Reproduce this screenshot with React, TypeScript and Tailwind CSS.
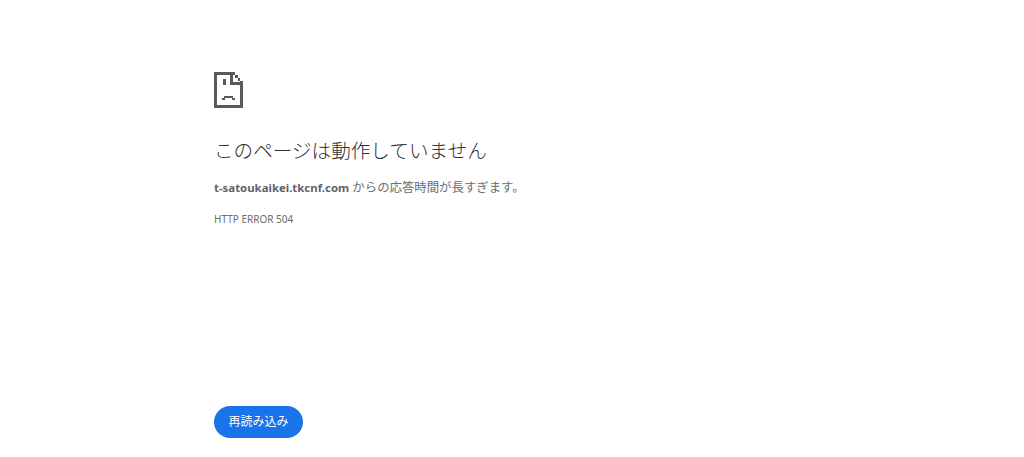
import React from 'react';

const stack = { fontFamily: '"Noto Sans", "Noto Sans CJK JP", sans-serif' };

function SadTab() {
  return (
    <svg width="29" height="36" viewBox="0 0 29 36" fill="none" shapeRendering="crispEdges">
      <path
        d="M0 0h21v3h3v3h2v3h3v27h-29z M3 3v30h23v-20h-10v-10z M19 3v7h7v-1h-2v-3h-3v-3z"
        fill="#5a5a5a"
        fillRule="evenodd"
      />
      <path d="M9 7h3v6h-3z" fill="#5a5a5a" />
      <path d="M8 26h2v-2h9v2h2v2h-3v-2h-7v2h-3z" fill="#5a5a5a" />
    </svg>
  );
}

export default function App() {
  return (
    <div className="h-[457px] w-[1024px] overflow-hidden bg-white" style={stack}>
      <div className="flex h-full flex-col pl-[214px] pt-[72px] pb-[19px]">
        <SadTab />
        <h1 className="mt-[29px] text-[19.6px] leading-[28px] font-light text-[#2f3235]">このページは動作していません</h1>
        <p className="mt-[13px] text-[12.4px] leading-[20px] text-[#6a6d71]">
          <span className="text-[11.4px] font-bold text-[#5f6368]">t-satoukaikei.tkcnf.com</span> からの応答時間が長すぎます。
        </p>
        <p className="mt-[14px] text-[10px] leading-[14px] text-[#6a6d71]">HTTP ERROR 504</p>
        <button className="mt-auto flex h-[32px] w-[89px] items-center justify-center rounded-full bg-[#1a73e8] text-[12px] text-white">
          再読み込み
        </button>
      </div>
    </div>
  );
}
